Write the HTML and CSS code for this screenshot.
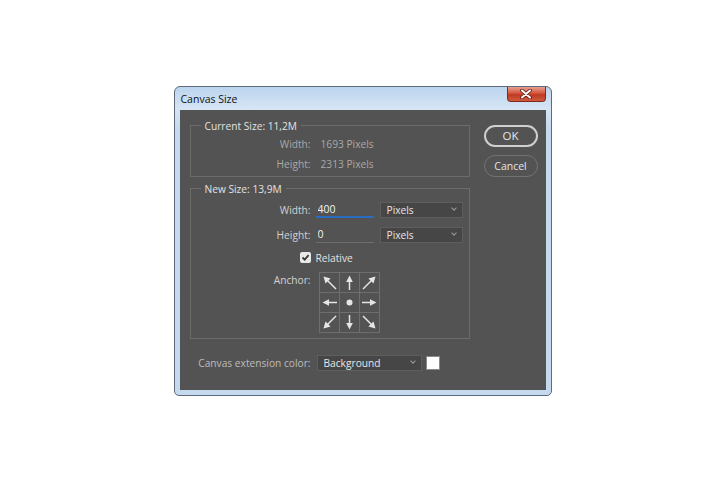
FILE: index.html
```html
<!DOCTYPE html>
<html lang="en">
<head>
  <meta charset="UTF-8">
  <title>Canvas Size</title>
  <link rel="stylesheet" href="styles.css">
</head>
<body>

  <div class="window">
    <div class="titlebar">
      <span class="title">Canvas Size</span>
      <div class="close">
        <svg width="12" height="10" viewBox="0 0 12 10">
          <path d="M2 1.5 L10 8.5 M10 1.5 L2 8.5" stroke="#5a1a10" stroke-width="3.6" stroke-linecap="round"/>
          <path d="M2 1.5 L10 8.5 M10 1.5 L2 8.5" stroke="#ffffff" stroke-width="2" stroke-linecap="round"/>
        </svg>
      </div>
    </div>

    <div class="content">
      <div class="main">
        <fieldset class="group current">
          <legend>Current Size: 11,2M</legend>
          <div class="info-row"><span class="label">Width:</span><span class="value">1693 Pixels</span></div>
          <div class="info-row"><span class="label">Height:</span><span class="value">2313 Pixels</span></div>
        </fieldset>

        <fieldset class="group new">
          <legend>New Size: 13,9M</legend>
          <div class="field-row">
            <span class="label">Width:</span>
            <input class="num focused" type="text" value="400">
            <div class="dropdown">Pixels<span class="chev"></span></div>
          </div>
          <div class="field-row">
            <span class="label">Height:</span>
            <input class="num" type="text" value="0">
            <div class="dropdown">Pixels<span class="chev"></span></div>
          </div>
          <div class="check-row">
            <span class="checkbox">
              <svg width="9" height="9" viewBox="0 0 9 9">
                <path d="M1.5 4.5 L3.7 6.7 L7.6 2.2" fill="none" stroke="#3a3a3a" stroke-width="1.8"/>
              </svg>
            </span>
            <span class="check-label">Relative</span>
          </div>
          <div class="anchor-row">
            <span class="label">Anchor:</span>
            <div class="anchor-grid">
              <div class="cell"><svg viewBox="0 0 19 19"><use href="#diag"/></svg></div>
              <div class="cell"><svg viewBox="0 0 19 19"><use href="#straight"/></svg></div>
              <div class="cell"><svg viewBox="0 0 19 19"><use href="#diag" transform="rotate(90 9.5 9.5)"/></svg></div>
              <div class="cell"><svg viewBox="0 0 19 19"><use href="#straight" transform="rotate(270 9.5 9.5)"/></svg></div>
              <div class="cell"><svg viewBox="0 0 19 19"><circle cx="9.5" cy="9.5" r="3" fill="#e6e6e6"/></svg></div>
              <div class="cell"><svg viewBox="0 0 19 19"><use href="#straight" transform="rotate(90 9.5 9.5)"/></svg></div>
              <div class="cell"><svg viewBox="0 0 19 19"><use href="#diag" transform="rotate(270 9.5 9.5)"/></svg></div>
              <div class="cell"><svg viewBox="0 0 19 19"><use href="#straight" transform="rotate(180 9.5 9.5)"/></svg></div>
              <div class="cell"><svg viewBox="0 0 19 19"><use href="#diag" transform="rotate(180 9.5 9.5)"/></svg></div>
            </div>
          </div>
        </fieldset>

        <div class="ext-row">
          <span class="label">Canvas extension color:</span>
          <div class="dropdown wide">Background<span class="chev"></span></div>
          <span class="swatch"></span>
        </div>
      </div>

      <div class="buttons">
        <button class="btn default">OK</button>
        <button class="btn">Cancel</button>
      </div>
    </div>
  </div>

  <!-- arrow shapes for the anchor grid -->
  <svg class="defs" width="0" height="0">
    <defs>
      <g id="straight">
        <line x1="9.5" y1="17" x2="9.5" y2="8" stroke="#e6e6e6" stroke-width="1.5"/>
        <polygon points="9.5,2.5 6.2,9 12.8,9" fill="#e6e6e6"/>
      </g>
      <g id="diag">
        <line x1="16" y1="16" x2="7" y2="7" stroke="#e6e6e6" stroke-width="1.5"/>
        <polygon points="3.5,3.5 10.6,5.5 5.5,10.6" fill="#e6e6e6"/>
      </g>
    </defs>
  </svg>

</body>
</html>
```

FILE: styles.css
```css
body {
  margin: 0;
  height: 100vh;
  display: flex;
  align-items: center;
  justify-content: center;
  background-color: #ffffff;
  font-family: "Open Sans", "Noto Sans", sans-serif;
  font-size: 10.2px;
}

.window {
  width: 378px;
  height: 310px;
  box-sizing: border-box;
  border: 1px solid #5d6b7b;
  border-radius: 6px 6px 5px 5px;
  background: linear-gradient(to bottom, #bcd4ee 0px, #d6e5f5 22px, #c6daef 40px, #c4d8ee 100%);
  padding: 0 5px 5px 5px;
  display: flex;
  flex-direction: column;
}

.titlebar {
  height: 23px;
  display: flex;
  justify-content: space-between;
  align-items: flex-start;
}

.title {
  color: #111111;
  padding-left: 1px;
  line-height: 24px;
  font-size: 10.5px;
}

.close {
  width: 39px;
  height: 15px;
  box-sizing: border-box;
  border: 1px solid #7d2a1d;
  border-top: none;
  border-radius: 0 0 4px 4px;
  background: linear-gradient(to bottom, #e6a090 0%, #d4553d 45%, #bf3a22 55%, #cf5a3e 100%);
  display: flex;
  align-items: center;
  justify-content: center;
}

.content {
  flex: 1;
  background-color: #535353;
  display: flex;
  padding: 8px 8px 0 10px;
  gap: 14px;
}

.main {
  width: 280px;
}

.group {
  margin: 0;
  padding: 0 0 2px 0;
  border: 1px solid #6c6c6c;
  color: #d6d6d6;
}

.group legend {
  margin-left: 10px;
  padding: 0 4px;
  line-height: 16px;
  color: #e2e2e2;
}

.group.new {
  margin-top: 4px;
  padding: 5px 0 5px 0;
}

.label {
  width: 120px;
  flex: none;
  text-align: right;
  white-space: nowrap;
  color: #d2d2d2;
}

.info-row {
  display: flex;
  height: 20px;
  line-height: 20px;
  gap: 10px;
}

.info-row .label,
.info-row .value {
  color: #a9a9a9;
}

.field-row {
  display: flex;
  height: 16px;
  line-height: 16px;
  align-items: center;
  gap: 6px;
  margin-bottom: 9px;
}

.num {
  width: 58px;
  height: 16px;
  box-sizing: border-box;
  margin: 0 0 0 -1px;
  padding: 0 2px;
  border: none;
  border-bottom: 1px solid #6e6e6e;
  background: transparent;
  color: #f2f2f2;
  font-family: inherit;
  font-size: 10.5px;
  outline: none;
}

.num.focused {
  border-bottom: 2px solid #2c6cc0;
}

.dropdown {
  position: relative;
  width: 83px;
  height: 16px;
  box-sizing: border-box;
  border: 1px solid #5e5e5e;
  background-color: #464646;
  color: #e6e6e6;
  padding-left: 6px;
  line-height: 14px;
}

.dropdown.wide {
  width: 105px;
}

.chev {
  position: absolute;
  right: 6px;
  top: 3px;
  width: 3px;
  height: 3px;
  border-right: 1px solid #9c9c9c;
  border-bottom: 1px solid #9c9c9c;
  transform: rotate(45deg);
}

.check-row {
  display: flex;
  align-items: center;
  height: 16px;
  margin-top: -2px;
  padding-left: 109px;
  gap: 5px;
}

.checkbox {
  width: 11px;
  height: 11px;
  box-sizing: border-box;
  border-radius: 2px;
  background-color: #e8e8e8;
  display: flex;
  align-items: center;
  justify-content: center;
}

.check-label {
  color: #e2e2e2;
}

.anchor-row {
  display: flex;
  align-items: flex-start;
  gap: 8px;
  margin-top: 6px;
  line-height: 16px;
}

.anchor-grid {
  display: grid;
  grid-template-columns: repeat(3, 19px);
  grid-template-rows: repeat(3, 19px);
  gap: 1px;
  padding: 1px;
  background-color: #6e6e6e;
}

.cell {
  background-color: #535353;
}

.cell svg {
  display: block;
  width: 19px;
  height: 19px;
}

.ext-row {
  display: flex;
  align-items: center;
  margin-top: 16px;
  padding-left: 1px;
  gap: 6px;
  line-height: 16px;
}

.ext-row .label {
  color: #bdbdbd;
}

.swatch {
  width: 14px;
  height: 14px;
  box-sizing: border-box;
  margin-left: -2px;
  border: 1px solid #8a8a8a;
  background-color: #ffffff;
}

.buttons {
  display: flex;
  flex-direction: column;
  gap: 8px;
  margin-top: 7px;
}

.btn {
  width: 54px;
  height: 22px;
  box-sizing: border-box;
  border: 1px solid #727272;
  border-radius: 11px;
  background-color: #535353;
  color: #e4e4e4;
  font-family: inherit;
  font-size: 10.5px;
  padding: 0;
}

.btn.default {
  border: 2px solid #cfcfcf;
  font-size: 11.5px;
}

.defs {
  position: absolute;
}
```
